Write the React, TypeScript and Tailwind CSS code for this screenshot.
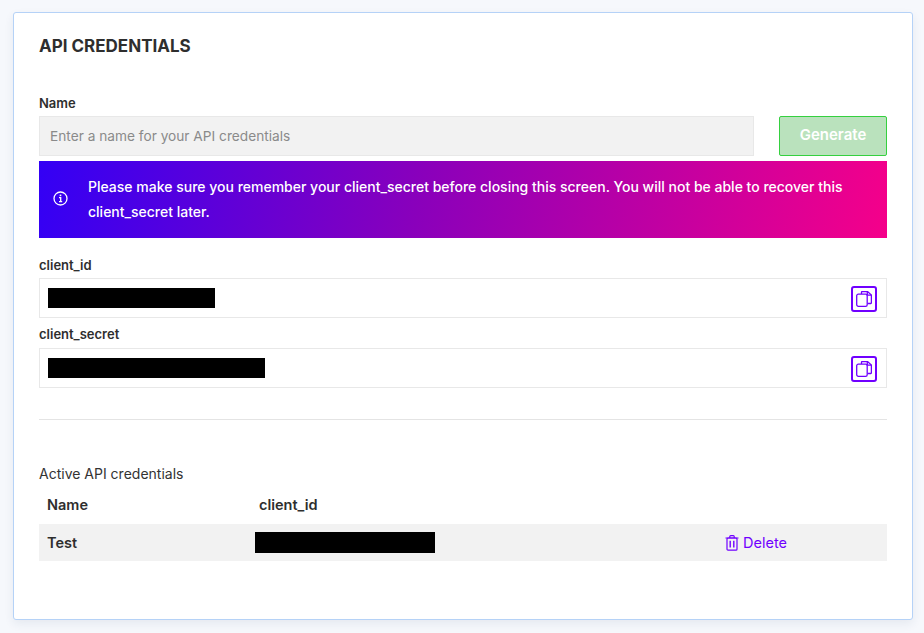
import React from 'react';

const CopyButton = () => (
  <button className="mt-[2px] mr-[9px] flex h-[26px] w-[26px] items-center justify-center rounded-[3px] border-2 border-[#7000ff]">
    <svg width="16" height="16" viewBox="0 0 16 16" fill="none" stroke="#7000ff" strokeWidth="1.3">
      <path d="M5.5 3V1.1a.6.6 0 0 1 .6-.6h5.4l3.9 3.6v7.8a.6.6 0 0 1-.6.6h-3.2" />
      <path d="M11.3.7v3.5h4" />
      <rect x=".7" y="3.2" width="10.5" height="12.1" rx="1.6" />
    </svg>
  </button>
);

const SecretField = ({ width }: { width: string }) => (
  <div className="flex h-10 items-center justify-between border border-[#e8e8e8] bg-white pl-2">
    <div className={`h-5 bg-black ${width}`} />
    <CopyButton />
  </div>
);

export default function App() {
  return (
    <div className="min-h-[633px] bg-[#f6f8fc] px-[13px] pt-3 font-['Inter',sans-serif] text-[#2e2e2e]">
      <div className="h-[608px] w-[900px] rounded-[3px] border border-[#b5d2f7] bg-white px-[25px] pt-6 shadow-[0_4px_10px_rgba(40,60,100,0.08)]">
        <h1 className="text-[17px] leading-[18px] font-bold">API CREDENTIALS</h1>

        <label className="mt-[41px] block text-[13px] leading-[14px] font-semibold">Name</label>
        <div className="mt-[6px] flex justify-between">
          <input
            className="h-10 w-[715px] border border-[#e8e8e8] bg-[#f2f2f2] px-[10px] text-[13.7px] placeholder:text-[#8a8a8a]"
            placeholder="Enter a name for your API credentials"
            readOnly
          />
          <button className="h-10 w-[108px] rounded-[2px] border border-[#35d03f] bg-[#bae2bd] pb-[1px] text-[15px] font-semibold text-white">
            Generate
          </button>
        </div>

        <div className="mt-[5px] flex h-[77px] items-center bg-[linear-gradient(100deg,#3300f5_0%,#8a00bb_45%,#f5008a_100%)] pr-10 pb-[2px] pl-[14px] text-white">
          <svg className="shrink-0" width="15" height="15" viewBox="0 0 15 15" fill="none" stroke="white">
            <circle cx="7.5" cy="7.5" r="6.5" strokeWidth="1.3" />
            <path d="M6 6.6h1.7v4M6 10.7h3.2" strokeWidth="1.3" />
            <path d="M7.5 3.6v1.6" strokeWidth="1.6" />
          </svg>
          <p className="ml-5 text-[14px] leading-[25px] font-medium">
            Please make sure you remember your client_secret before closing this screen. You will not be able to recover
            this client_secret later.
          </p>
        </div>

        <label className="mt-5 block text-[13px] leading-[14px] font-semibold">client_id</label>
        <div className="mt-[6px]">
          <SecretField width="w-[167px]" />
        </div>
        <label className="mt-[9px] block text-[13px] leading-[14px] font-semibold">client_secret</label>
        <div className="mt-[7px]">
          <SecretField width="w-[217px]" />
        </div>

        <hr className="mt-[31px] border-[#e4e4e4]" />

        <h2 className="mt-[45px] text-[14px] leading-[18px] text-[#333]">Active API credentials</h2>
        <div className="mt-[13px] flex h-[18px] items-center px-2 text-[14.5px] font-semibold">
          <div className="w-[212px]">Name</div>
          <div>client_id</div>
        </div>
        <div className="mt-[10px] flex h-[37px] items-center bg-[#f2f2f2] px-2 text-[14.5px] font-semibold">
          <div className="w-[208px]">Test</div>
          <div className="h-[21px] w-[180px] bg-black" />
          <button className="ml-[290px] flex items-center gap-1 text-[14.5px] font-normal text-[#7000ff]">
            <svg width="14" height="16" viewBox="0 0 14 16" fill="none" stroke="#7000ff" strokeWidth="1.2">
              <path d="M.5 3h13M4.8 3V1.6a.9.9 0 0 1 .9-.9h2.6a.9.9 0 0 1 .9.9V3" />
              <rect x="2" y="3" width="10" height="12.2" rx="1" />
              <path d="M5.2 5.8v6.8M8.8 5.8v6.8" strokeWidth="1.4" />
            </svg>
            Delete
          </button>
        </div>
      </div>
    </div>
  );
}
